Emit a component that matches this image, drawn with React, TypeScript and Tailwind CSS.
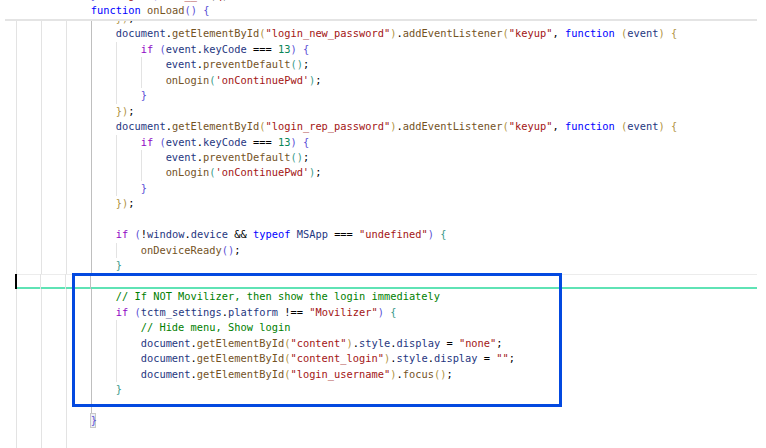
type Tok = [string, string];

const C: Record<string, string> = {
  k: 'text-[#0000ff]',
  c: 'text-[#8f08c4]',
  v: 'text-[#1f377f]',
  m: 'text-[#74531f]',
  s: 'text-[#a31515]',
  n: 'text-[#098658]',
  g: 'text-[#008000]',
  p: 'text-[#000000]',
  b1: 'text-[#5a4fd6]',
  b2: 'text-[#b0933f]',
  b3: 'text-[#3a9a8a]',
};

const G: Record<string, string> = {
  a: 'border-l border-[#e3e3e3]',
  d: 'border-l border-[#bfbfbf]',
  x: 'border-l-2 border-black -ml-px',
  n: '',
};

type Line = { g: string; toks: Tok[]; cur?: boolean; box?: boolean };

const listener = (id: string): Line[] => [
  {
    g: 'aaad',
    toks: [
      ['v', 'document'], ['p', '.'], ['m', 'getElementById'], ['b2', '('], ['s', `"${id}"`], ['b2', ')'],
      ['p', '.'], ['m', 'addEventListener'], ['b2', '('], ['s', '"keyup"'], ['p', ', '], ['k', 'function'],
      ['p', ' '], ['b2', '('], ['v', 'event'], ['b2', ')'], ['p', ' '], ['b2', '{'],
    ],
  },
  {
    g: 'aaada',
    toks: [
      ['c', 'if'], ['p', ' '], ['b1', '('], ['v', 'event'], ['p', '.'], ['v', 'keyCode'], ['p', ' === '],
      ['n', '13'], ['b1', ')'], ['p', ' '], ['b1', '{'],
    ],
  },
  { g: 'aaadaa', toks: [['v', 'event'], ['p', '.'], ['m', 'preventDefault'], ['b3', '()'], ['p', ';']] },
  { g: 'aaadaa', toks: [['m', 'onLogin'], ['b3', '('], ['s', "'onContinuePwd'"], ['b3', ')'], ['p', ';']] },
  { g: 'aaada', toks: [['b1', '}']] },
  { g: 'aaad', toks: [['b2', '})'], ['p', ';']] },
];

const display = (id: string, val: string): Line => ({
  g: 'aaada',
  toks: [
    ['v', 'document'], ['p', '.'], ['m', 'getElementById'], ['b2', '('], ['s', `"${id}"`], ['b2', ')'],
    ['p', '.'], ['v', 'style'], ['p', '.'], ['v', 'display'], ['p', ' = '], ['s', `"${val}"`], ['p', ';'],
  ],
});

const lines: Line[] = [
  { g: 'aaad', toks: [['b2', '})'], ['p', ';']] },
  ...listener('login_new_password'),
  ...listener('login_rep_password'),
  { g: 'aaad', toks: [] },
  {
    g: 'aaad',
    toks: [
      ['c', 'if'], ['p', ' '], ['b1', '('], ['p', '!'], ['v', 'window'], ['p', '.'], ['v', 'device'], ['p', ' && '],
      ['k', 'typeof'], ['p', ' '], ['v', 'MSApp'], ['p', ' === '], ['s', '"undefined"'], ['b1', ')'], ['p', ' '], ['b3', '{'],
    ],
  },
  { g: 'aaada', toks: [['m', 'onDeviceReady'], ['b1', '()'], ['p', ';']] },
  { g: 'aaad', toks: [['b3', '}']] },
  { g: 'xaad', toks: [], cur: true },
  { g: 'aaad', toks: [['g', '// If NOT Movilizer, then show the login immediately']] },
  {
    g: 'aaad',
    toks: [
      ['c', 'if'], ['p', ' '], ['b1', '('], ['v', 'tctm_settings'], ['p', '.'], ['v', 'platform'], ['p', ' !== '],
      ['s', '"Movilizer"'], ['b1', ')'], ['p', ' '], ['b3', '{'],
    ],
  },
  { g: 'aaada', toks: [['g', '// Hide menu, Show login']] },
  display('content', 'none'),
  display('content_login', ''),
  {
    g: 'aaada',
    toks: [
      ['v', 'document'], ['p', '.'], ['m', 'getElementById'], ['b2', '('], ['s', '"login_username"'], ['b2', ')'],
      ['p', '.'], ['m', 'focus'], ['b2', '()'], ['p', ';'],
    ],
  },
  { g: 'aaad', toks: [['b3', '}']] },
  { g: 'aaad', toks: [] },
  { g: 'aaa', toks: [['b1', '}']], box: true },
  { g: 'aaa', toks: [] },
  { g: 'aaa', toks: [] },
];

function Code({ toks }: { toks: Tok[] }) {
  return (
    <>
      {toks.map(([c, t], i) => (
        <span key={i} className={C[c]}>
          {t}
        </span>
      ))}
    </>
  );
}

export default function App() {
  return (
    <div className="relative w-[766px] h-[448px] overflow-hidden bg-white font-['DejaVu_Sans_Mono',monospace] text-[10.37px] whitespace-pre">
      {/* sticky header */}
      <div className="absolute left-[5px] top-0 z-10 w-[752px] h-[21px] overflow-hidden bg-white border-b-2 border-[#e4e4e4]">
        <div className="flex flex-col mt-[-12.2px] ml-[11px]">
          <div className="h-[15.48px] leading-[15.48px]">
            <Code toks={[['p', '            '], ['b1', '}'], ['p', ', '], ['s', '"login"'], ['b1', ')'], ['p', ';  '], ['s', '"__"'], ['p', ' ('], ['s', 'q'], ['p', ')']]} />
          </div>
          <div className="h-[15.48px] leading-[15.48px]">
            <Code toks={[['p', '            '], ['k', 'function'], ['p', ' '], ['m', 'onLoad'], ['b1', '()'], ['p', ' '], ['b1', '{']]} />
          </div>
        </div>
      </div>

      <div className="flex flex-col ml-[16px] mt-[10.8px] w-[741px]">
        {lines.map((l, i) => (
          <div
            key={i}
            className={
              'flex h-[15.48px] leading-[15.48px] ' +
              (l.cur ? 'shadow-[inset_0_1px_0_#ececec,inset_0_-2px_0_#5fe3b5]' : '')
            }
          >
            {l.g.split('').map((g, j) => (
              <span key={j} className={'shrink-0 w-[4ch] h-full ' + G[g]} />
            ))}
            {l.box ? (
              <span className="h-full w-[1ch] -ml-px border border-[#c8c8c8] bg-[#eef0f5] text-[#5a4fd6] leading-[13.5px]">{'}'}</span>
            ) : (
              <span>
                <Code toks={l.toks} />
              </span>
            )}
          </div>
        ))}
      </div>

      {/* highlight box */}
      <div className="absolute left-[72px] top-[273px] w-[490px] h-[134px] border-[3px] border-[#0349e0]" />
    </div>
  );
}
